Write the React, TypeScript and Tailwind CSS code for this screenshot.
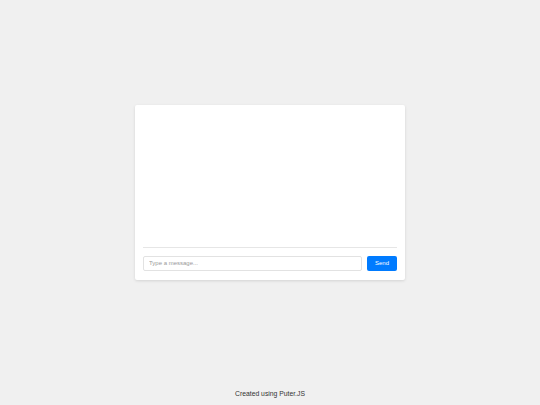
export default function App() {
  return (
    <div className="flex min-h-[405px] flex-col bg-[#f0f0f0] font-['Liberation_Sans',Arial,sans-serif]">
      <main className="flex flex-1 items-center justify-center">
        <section className="w-[270px] rounded-[2px] bg-white px-2 pt-2 pb-[9px] shadow-[0_1px_3px_rgba(0,0,0,0.12)]">
          <div className="h-[135px] border-b border-[#e6e6e6]" />
          <div className="mt-2 flex h-[15px] gap-[5px]">
            <input
              type="text"
              placeholder="Type a message..."
              className="min-w-0 flex-1 rounded-[2px] border border-[#e2e2e2] px-[5px] text-[6px] text-gray-700 outline-none placeholder:text-[#999]"
            />
            <button
              type="button"
              className="w-[30px] rounded-[2px] bg-[#007bff] text-[6px] text-white"
            >
              Send
            </button>
          </div>
        </section>
      </main>
      <footer className="flex h-[21px] items-center justify-center text-[6.8px] text-[#333]">
        Created using Puter.JS
      </footer>
    </div>
  )
}
